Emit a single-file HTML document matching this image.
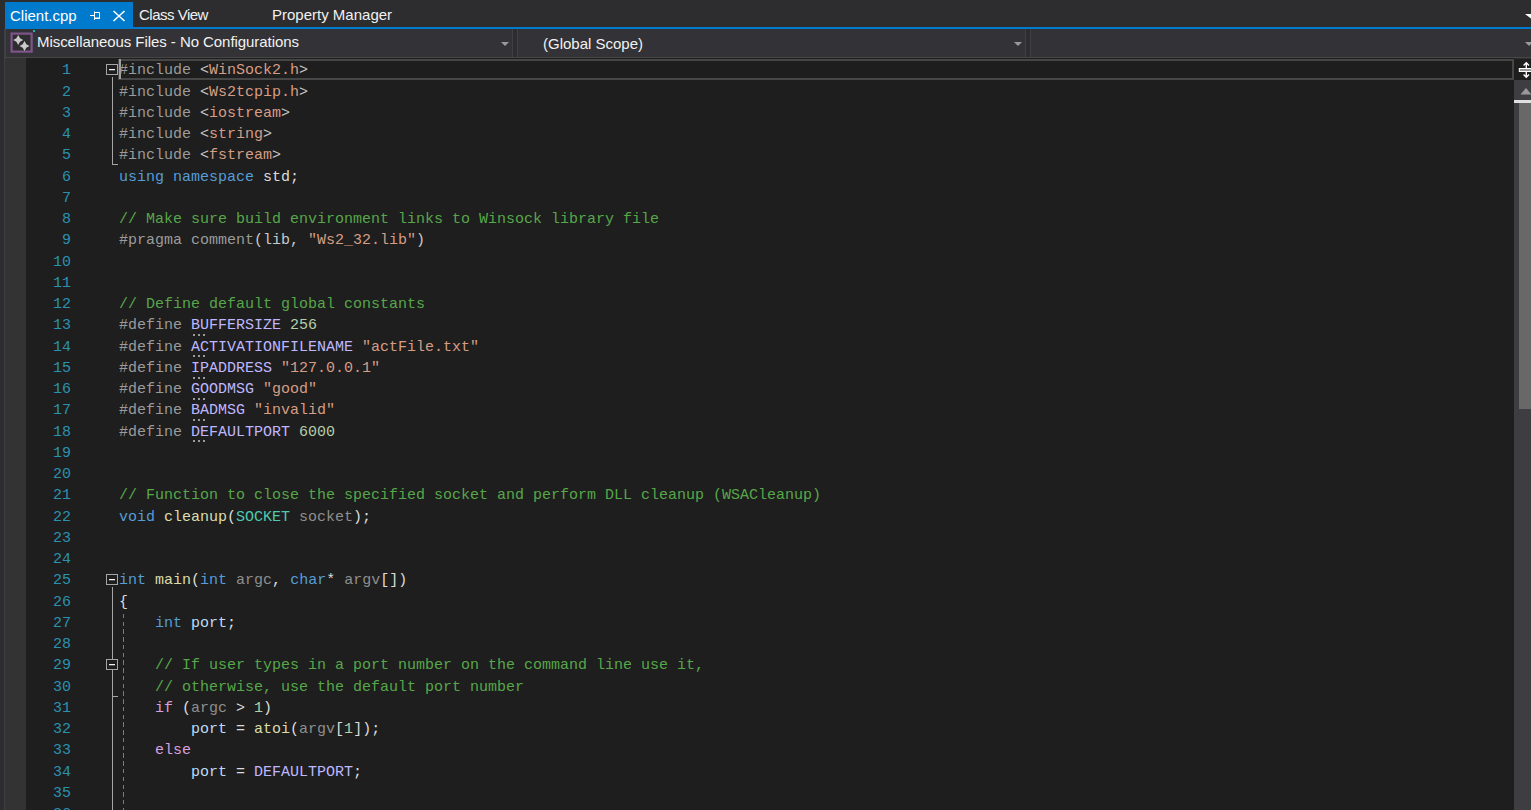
<!DOCTYPE html>
<html><head><meta charset="utf-8">
<style>
*{margin:0;padding:0;box-sizing:border-box}
html,body{width:1531px;height:810px;overflow:hidden;background:#2d2d30}
body{position:relative;font-family:"Liberation Sans",sans-serif}
.abs{position:absolute}
#tab{left:5px;top:2px;width:128px;height:27px;background:#007acc}
#tabline{left:5px;top:27px;width:1526px;height:2px;background:#007acc}
.tt{position:absolute;font-size:15px;line-height:17px;color:#f1f1f1;white-space:nowrap}
#nav{left:5px;top:29px;width:1526px;height:29px;background:#2d2d30}
.dd{position:absolute;top:29px;height:29px;background:#333337;border:1px solid #3f3f46;border-top:none}
.arr{position:absolute;width:0;height:0;border-left:4px solid transparent;border-right:4px solid transparent;border-top:4px solid #999}
#navb{left:5px;top:57px;width:1526px;height:1px;background:#464646}
#lbar{left:4px;top:29px;width:1px;height:781px;background:#3f3f46}
#margin{left:5px;top:58px;width:21px;height:752px;background:#333333}
#editor{left:26px;top:58px;width:1488px;height:752px;background:#1e1e1e}
#curline{left:118px;top:59px;width:1396px;height:21px;border:2px solid #464646}
.code{position:absolute;font-family:"Liberation Mono",monospace;font-size:15px;white-space:pre}
.ln{height:21.26px;line-height:21.26px}
#nums{left:26px;top:60.3px;width:45px;text-align:right;color:#2b91af}
#src{left:119px;top:60.3px;color:#dcdcdc}
.pp{color:#9b9b9b} .st{color:#d69d85} .pu{color:#dcdcdc} .kw{color:#569cd6}
.cm{color:#57a64a} .mc{color:#beb7ff} .nu{color:#b5cea8} .fn{color:#dcdcaa}
.ty{color:#4ec9b0} .pa{color:#8e8e8e} .ct{color:#d8a0df} .lv{color:#bcdcf6} .br{color:#c8c8c8}
.box{position:absolute;left:106px;width:12px;height:11px;border:1px solid #a5a5a5;background:#1e1e1e}
.box:after{content:"";position:absolute;left:2px;top:4px;width:6px;height:1px;background:#f0f0f0;box-shadow:0 0.5px 0 #8a8a8a}
.vl{position:absolute;left:112px;width:1px;background:#a5a5a5}
.tick{position:absolute;left:112px;width:6px;height:1px;background:#a5a5a5}
#guide{left:122.5px;width:1.5px;background:repeating-linear-gradient(to bottom,#7a7a7a 0,#7a7a7a 4.4px,transparent 4.4px,transparent 7.75px)}
.dots{position:absolute;left:193px;width:12px;height:2px;background:repeating-linear-gradient(to right,#9a9a9a 0,#9a9a9a 2px,transparent 2px,transparent 5px)}
#caret{left:119px;top:59px;width:2px;height:20px;background:#a0a0a0}
#sbar{left:1514px;top:80px;width:17px;height:730px;background:#3e3e42}
#split{left:1514px;top:59px;width:17px;height:21px;background:#1e1e1e}
#thumb{left:1519px;top:103px;width:12px;height:306px;background:#686868}
#thumbtop{left:1514px;top:100px;width:17px;height:3px;background:#e0e0e0}
</style></head><body>
<div id="tab" class="abs"></div>
<div id="tabline" class="abs"></div>
<div class="tt" style="left:10px;top:7px;color:#fff">Client.cpp</div>
<svg class="abs" style="left:89px;top:10px" width="14" height="12" viewBox="0 0 14 12">
 <path d="M1 5.5H5.5M5.5 1.5V10M5.5 2.5H10.5V8.5H5.5" stroke="#fff" stroke-width="1" fill="none"/>
 <rect x="5.5" y="7.5" width="5" height="1.5" fill="#fff"/>
</svg>
<svg class="abs" style="left:112px;top:10px" width="14" height="12" viewBox="0 0 14 12">
 <path d="M1.5 1L12.5 11M12.5 1L1.5 11" stroke="#fff" stroke-width="1.6" fill="none"/>
</svg>
<div class="tt" style="left:139px;top:6px;letter-spacing:-0.5px">Class View</div>
<div class="tt" style="left:272px;top:6px">Property Manager</div>
<svg class="abs" style="left:1525px;top:13px" width="8" height="8" viewBox="0 0 8 8"><path d="M0 1H8V7Z" fill="#fff"/></svg>

<div class="dd" style="left:5px;width:508px"></div>
<div class="dd" style="left:517px;width:509px"></div>
<div class="dd" style="left:1030px;width:501px;border-right:none"></div>
<div id="navb" class="abs"></div>
<div id="lbar" class="abs"></div>
<svg class="abs" style="left:10px;top:32px" width="24" height="22" viewBox="0 0 24 22">
 <rect x="1.6" y="1.6" width="20" height="18" fill="#2d2d30" stroke="#84578e" stroke-width="2.2" opacity="0.95"/>
</svg>
<svg class="abs" style="left:10px;top:32px;filter:blur(0.6px)" width="24" height="22" viewBox="0 0 24 22">
 <g fill="#cacaca">
  <path d="M8.2 3L10 6.2L13.2 8L10 9.8L8.2 13L6.4 9.8L3.2 8L6.4 6.2Z"/>
  <path d="M14.5 9L16.3 12.2L19.5 14L16.3 15.8L14.5 19L12.7 15.8L9.5 14L12.7 12.2Z"/>
 </g>
</svg>
<div class="tt" style="left:37px;top:33px;letter-spacing:-0.06px">Miscellaneous Files - No Configurations</div>
<div class="arr" style="left:501px;top:42px"></div>
<div class="tt" style="left:543px;top:34.5px">(Global Scope)</div>
<div class="arr" style="left:1014px;top:42px"></div>
<div class="arr" style="left:1525px;top:42px"></div>

<div id="margin" class="abs"></div>
<div id="editor" class="abs"></div>
<div id="curline" class="abs"></div>
<div id="caret" class="abs"></div>
<div id="nums" class="code"><div class="ln">1</div><div class="ln">2</div><div class="ln">3</div><div class="ln">4</div><div class="ln">5</div><div class="ln">6</div><div class="ln">7</div><div class="ln">8</div><div class="ln">9</div><div class="ln">10</div><div class="ln">11</div><div class="ln">12</div><div class="ln">13</div><div class="ln">14</div><div class="ln">15</div><div class="ln">16</div><div class="ln">17</div><div class="ln">18</div><div class="ln">19</div><div class="ln">20</div><div class="ln">21</div><div class="ln">22</div><div class="ln">23</div><div class="ln">24</div><div class="ln">25</div><div class="ln">26</div><div class="ln">27</div><div class="ln">28</div><div class="ln">29</div><div class="ln">30</div><div class="ln">31</div><div class="ln">32</div><div class="ln">33</div><div class="ln">34</div><div class="ln">35</div><div class="ln">36</div></div>
<div id="src" class="code"><div class="ln"><span class="pp">#include</span><span class="pu"> </span><span class="br">&lt;</span><span class="st">WinSock2.h</span><span class="br">&gt;</span></div><div class="ln"><span class="pp">#include</span><span class="pu"> </span><span class="br">&lt;</span><span class="st">Ws2tcpip.h</span><span class="br">&gt;</span></div><div class="ln"><span class="pp">#include</span><span class="pu"> </span><span class="br">&lt;</span><span class="st">iostream</span><span class="br">&gt;</span></div><div class="ln"><span class="pp">#include</span><span class="pu"> </span><span class="br">&lt;</span><span class="st">string</span><span class="br">&gt;</span></div><div class="ln"><span class="pp">#include</span><span class="pu"> </span><span class="br">&lt;</span><span class="st">fstream</span><span class="br">&gt;</span></div><div class="ln"><span class="kw">using</span><span class="pu"> </span><span class="kw">namespace</span><span class="pu"> std;</span></div><div class="ln"></div><div class="ln"><span class="cm">// Make sure build environment links to Winsock library file</span></div><div class="ln"><span class="pp">#pragma comment</span><span class="br">(lib, </span><span class="st">"Ws2_32.lib"</span><span class="br">)</span></div><div class="ln"></div><div class="ln"></div><div class="ln"><span class="cm">// Define default global constants</span></div><div class="ln"><span class="pp">#define </span><span class="mc">BUFFERSIZE</span><span class="pu"> </span><span class="nu">256</span></div><div class="ln"><span class="pp">#define </span><span class="mc">ACTIVATIONFILENAME</span><span class="pu"> </span><span class="st">"actFile.txt"</span></div><div class="ln"><span class="pp">#define </span><span class="mc">IPADDRESS</span><span class="pu"> </span><span class="st">"127.0.0.1"</span></div><div class="ln"><span class="pp">#define </span><span class="mc">GOODMSG</span><span class="pu"> </span><span class="st">"good"</span></div><div class="ln"><span class="pp">#define </span><span class="mc">BADMSG</span><span class="pu"> </span><span class="st">"invalid"</span></div><div class="ln"><span class="pp">#define </span><span class="mc">DEFAULTPORT</span><span class="pu"> </span><span class="nu">6000</span></div><div class="ln"></div><div class="ln"></div><div class="ln"><span class="cm">// Function to close the specified socket and perform DLL cleanup (WSACleanup)</span></div><div class="ln"><span class="kw">void</span><span class="pu"> </span><span class="fn">cleanup</span><span class="pu">(</span><span class="ty">SOCKET</span><span class="pu"> </span><span class="pa">socket</span><span class="pu">);</span></div><div class="ln"></div><div class="ln"></div><div class="ln"><span class="kw">int</span><span class="pu"> </span><span class="fn">main</span><span class="pu">(</span><span class="kw">int</span><span class="pu"> </span><span class="pa">argc</span><span class="pu">, </span><span class="kw">char</span><span class="pu">* </span><span class="pa">argv</span><span class="pu">[])</span></div><div class="ln"><span class="pu">{</span></div><div class="ln"><span class="pu">    </span><span class="kw">int</span><span class="pu"> </span><span class="lv">port</span><span class="pu">;</span></div><div class="ln"></div><div class="ln"><span class="cm">    // If user types in a port number on the command line use it,</span></div><div class="ln"><span class="cm">    // otherwise, use the default port number</span></div><div class="ln"><span class="pu">    </span><span class="ct">if</span><span class="pu"> (</span><span class="pa">argc</span><span class="pu"> &gt; </span><span class="nu">1</span><span class="pu">)</span></div><div class="ln"><span class="pu">        </span><span class="lv">port</span><span class="pu"> = </span><span class="fn">atoi</span><span class="pu">(</span><span class="pa">argv</span><span class="pu">[</span><span class="nu">1</span><span class="pu">]);</span></div><div class="ln"><span class="pu">    </span><span class="ct">else</span></div><div class="ln"><span class="pu">        </span><span class="lv">port</span><span class="pu"> = </span><span class="mc">DEFAULTPORT</span><span class="pu">;</span></div><div class="ln"></div><div class="ln"></div></div>
<div class="dots" style="top:334.02px"></div>
<div class="dots" style="top:355.28px"></div>
<div class="dots" style="top:376.54px"></div>
<div class="dots" style="top:397.80px"></div>
<div class="dots" style="top:419.06px"></div>
<div class="dots" style="top:440.32px"></div>
<div class="vl" style="top:77.4px;height:86.2px"></div>
<div class="tick" style="top:164.1px"></div>
<div class="box" style="top:64.4px"></div>
<div class="vl" style="top:586.9px;height:223.1px"></div>
<div class="tick" style="top:696.3px"></div>
<div class="box" style="top:573.9px"></div>
<div class="box" style="top:658.8px"></div>
<div id="guide" class="abs" style="top:613.7px;height:200px"></div>

<div id="split" class="abs"></div>
<svg class="abs" style="left:1518px;top:61px" width="13" height="18" viewBox="0 0 13 18">
 <path d="M8.3 1.8V16.2M5.6 4.5L8.3 1.8L11 4.5M5.6 13.5L8.3 16.2L11 13.5" stroke="#fff" stroke-width="1.4" fill="none"/>
 <rect x="0.8" y="7" width="13" height="4" fill="#fff"/>
 <rect x="1.8" y="8.2" width="12" height="1.6" fill="#808080"/>
</svg>
<div class="abs" style="left:33px;top:30px;width:1.6px;height:1.6px;border-radius:1px;background:#1ce1e1"></div>
<div id="sbar" class="abs"></div>
<svg class="abs" style="left:1520px;top:87px" width="11" height="8" viewBox="0 0 11 8"><path d="M0.5 7.5L6 1L11.5 7.5Z" fill="#999"/></svg>
<div id="thumbtop" class="abs"></div>
<div id="thumb" class="abs"></div>
</body></html>
